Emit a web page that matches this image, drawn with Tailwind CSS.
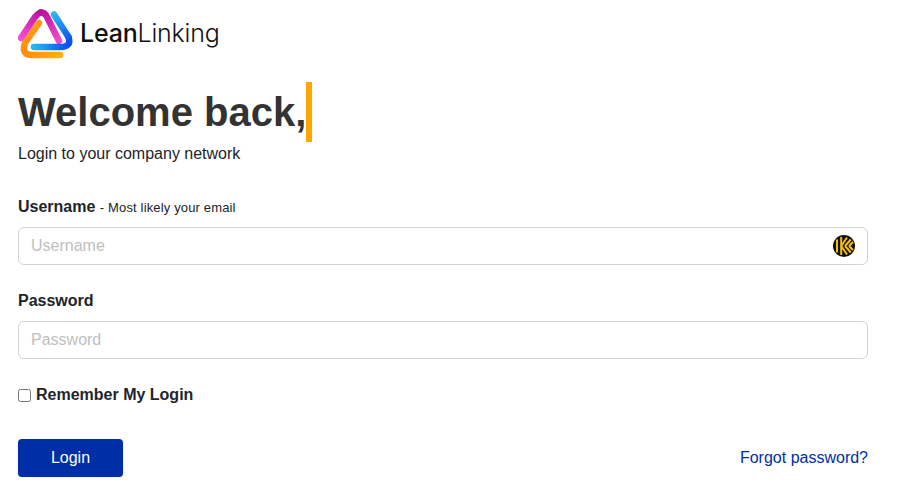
<!DOCTYPE html>
<html lang="en">
<head>
  <meta charset="UTF-8" />
  <title>LeanLinking Login</title>
  <script src="https://cdn.jsdelivr.net/npm/@tailwindcss/browser@4"></script>
</head>
<body class="bg-white font-['Liberation_Sans',Arial,sans-serif] text-[#212529] overflow-hidden">
  <div class="w-[850px] ml-[18px]">
    <!-- logo -->
    <div class="flex items-center h-[60px] pt-[7px]">
      <svg width="56" height="52" viewBox="18 7 56 52" fill="none" stroke-width="6.5" stroke-linecap="round" stroke-linejoin="round">
        <defs>
          <linearGradient id="pink" x1="20" y1="38" x2="40" y2="10" gradientUnits="userSpaceOnUse">
            <stop offset="0" stop-color="#f850d8" />
            <stop offset="1" stop-color="#b8129c" />
          </linearGradient>
          <linearGradient id="pinkright" x1="42" y1="10" x2="59" y2="40" gradientUnits="userSpaceOnUse">
            <stop offset="0" stop-color="#b8129c" />
            <stop offset="1" stop-color="#f04cd0" />
          </linearGradient>
          <linearGradient id="orange" x1="40" y1="20" x2="60" y2="54" gradientUnits="userSpaceOnUse">
            <stop offset="0" stop-color="#ff9a18" />
            <stop offset="0.5" stop-color="#ff8c0a" />
            <stop offset="1" stop-color="#ffb014" />
          </linearGradient>
          <linearGradient id="bluetop" x1="53" y1="12" x2="70" y2="42" gradientUnits="userSpaceOnUse">
            <stop offset="0" stop-color="#2cb6f4" />
            <stop offset="1" stop-color="#0a50f2" />
          </linearGradient>
          <linearGradient id="bluebottom" x1="34" y1="46" x2="68" y2="46" gradientUnits="userSpaceOnUse">
            <stop offset="0" stop-color="#20b8f6" />
            <stop offset="1" stop-color="#0a50f2" />
          </linearGradient>
        </defs>
        <path d="M39 22 L25 42 Q21 54 32 54 L60 54" stroke="url(#orange)" />
        <path d="M21 37 L35 16 Q39 11.5 41 11.5" stroke="url(#pink)" />
        <path d="M41 11.5 Q45 11.5 47 16 L59 40" stroke="url(#pinkright)" />
        <path d="M34 46 L60 46 Q72 46 68.5 36" stroke="url(#bluebottom)" />
        <path d="M54 13.5 L68.5 36" stroke="url(#bluetop)" />
      </svg>
      <span class="ml-[6px] mt-[0px] text-[25px] leading-none text-[#111] font-['Inter',sans-serif] tracking-[-0.2px]"><span class="font-medium">Lean</span><span class="font-light">Linking</span></span>
    </div>

    <!-- heading -->
    <div class="flex items-start mt-[22px]">
      <h1 class="text-[40px] leading-[60px] font-bold text-[#333]">Welcome back,</h1>
      <span class="w-[6px] h-[60px] bg-[#ffa500]"></span>
    </div>
    <p class="text-base leading-6">Login to your company network</p>

    <!-- form -->
    <form class="mt-[29px]">
      <label class="block leading-6 font-bold">Username <span class="text-[13px] font-normal tracking-[0.15px]">- Most likely your email</span></label>
      <div class="relative mt-[7px]">
        <input type="text" placeholder="Username" class="block w-full h-[38px] px-3 border border-[#ced4da] rounded-md text-base placeholder:text-[#c0c0c0]" />
        <svg class="absolute right-[13px] top-[8px]" width="22" height="22" viewBox="0 0 22 22">
          <circle cx="11" cy="11" r="11" fill="#111" />
          <g fill="none" stroke="#f9bd0f" stroke-width="2">
            <path d="M4 4.5V17.5M8.2 2V20" />
            <path d="M8.2 11L14 2.5M12 11L17.8 4.5M16 11L20 7" />
            <path d="M8.2 11L14 19.5M12 11L17.8 17.5M16 11L20 15" />
          </g>
        </svg>
      </div>

      <label class="block leading-6 font-bold mt-[24px]">Password</label>
      <input type="password" placeholder="Password" class="block w-full h-[38px] mt-[8px] px-3 border border-[#ced4da] rounded-md text-base placeholder:text-[#c0c0c0]" />

      <label class="flex items-center leading-6 font-bold mt-[24px]">
        <input type="checkbox" class="w-[13px] h-[13px] mr-[5px] appearance-auto" />
        Remember My Login
      </label>

      <div class="flex items-center justify-between mt-[32px]">
        <button type="button" class="w-[105px] h-[38px] bg-[#002ea6] text-white rounded shadow-sm">Login</button>
        <a href="#" class="text-[#002ea6]">Forgot password?</a>
      </div>
    </form>
  </div>
</body>
</html>
